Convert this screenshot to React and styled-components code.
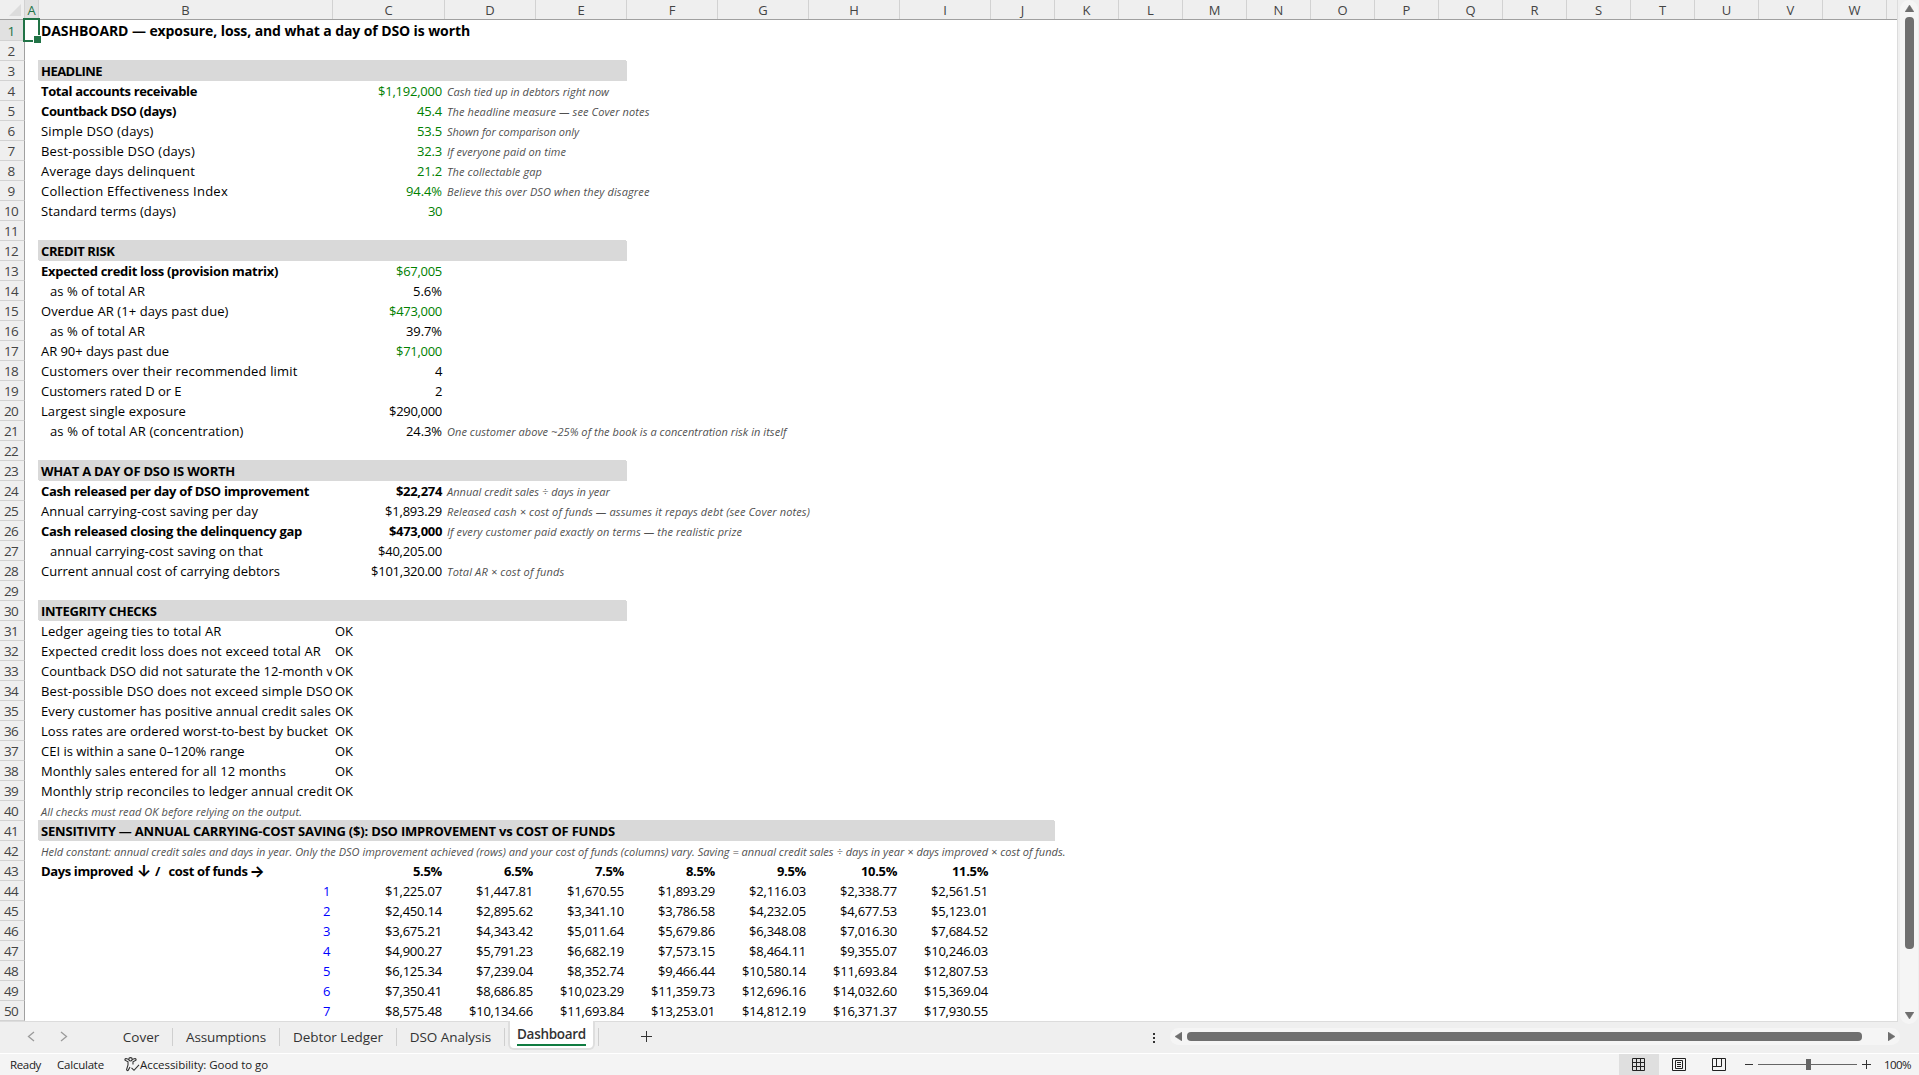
import React, { useLayoutEffect, useRef, useState } from "react";
import styled, { createGlobalStyle, css } from "styled-components";

const GlobalStyle = createGlobalStyle`
  * {
    box-sizing: border-box;
  }
  body {
    margin: 0;
    overflow: hidden;
    background: #fff;
    color: #000;
    font-family: "Open Sans", Calibri, sans-serif;
  }
`;

const columns = [
  { name: "A", width: 14 },
  { name: "B", width: 294 },
  { name: "C", width: 112 },
  { name: "D", width: 91 },
  { name: "E", width: 91 },
  { name: "F", width: 91 },
  { name: "G", width: 91 },
  { name: "H", width: 91 },
  { name: "I", width: 91 },
  ..."JKLMNOPQRSTUVW".split("").map((name) => ({ name, width: 64 })),
];

const head = (text, w, wide) => ({ type: "head", text, w, wide });
const line = (text, w, value, opts = {}) => ({
  type: "line",
  text,
  w,
  value,
  ...opts,
});
const check = (text, w) => ({ type: "check", text, w });
const remark = (text, w) => ({ type: "remark", text, w });
const blank = { type: "blank" };

const rates = ["5.5%", "6.5%", "7.5%", "8.5%", "9.5%", "10.5%", "11.5%"];
const savings = [
  ["$1,225.07", "$1,447.81", "$1,670.55", "$1,893.29", "$2,116.03", "$2,338.77", "$2,561.51"],
  ["$2,450.14", "$2,895.62", "$3,341.10", "$3,786.58", "$4,232.05", "$4,677.53", "$5,123.01"],
  ["$3,675.21", "$4,343.42", "$5,011.64", "$5,679.86", "$6,348.08", "$7,016.30", "$7,684.52"],
  ["$4,900.27", "$5,791.23", "$6,682.19", "$7,573.15", "$8,464.11", "$9,355.07", "$10,246.03"],
  ["$6,125.34", "$7,239.04", "$8,352.74", "$9,466.44", "$10,580.14", "$11,693.84", "$12,807.53"],
  ["$7,350.41", "$8,686.85", "$10,023.29", "$11,359.73", "$12,696.16", "$14,032.60", "$15,369.04"],
  ["$8,575.48", "$10,134.66", "$11,693.84", "$13,253.01", "$14,812.19", "$16,371.37", "$17,930.55"],
];

const rows = [
  { type: "title", text: "DASHBOARD — exposure, loss, and what a day of DSO is worth", w: 429 },
  blank,
  head("HEADLINE", 61),
  line("Total accounts receivable", 156, "$1,192,000", { bold: true, link: true, note: "Cash tied up in debtors right now", nw: 162 }),
  line("Countback DSO (days)", 135, "45.4", { bold: true, link: true, note: "The headline measure — see Cover notes", nw: 202.5 }),
  line("Simple DSO (days)", 112.5, "53.5", { link: true, note: "Shown for comparison only", nw: 132 }),
  line("Best-possible DSO (days)", 154, "32.3", { link: true, note: "If everyone paid on time", nw: 119 }),
  line("Average days delinquent", 154, "21.2", { link: true, note: "The collectable gap", nw: 95 }),
  line("Collection Effectiveness Index", 187, "94.4%", { link: true, note: "Believe this over DSO when they disagree", nw: 202.5 }),
  line("Standard terms (days)", 135, "30", { link: true }),
  blank,
  head("CREDIT RISK", 73.5),
  line("Expected credit loss (provision matrix)", 237, "$67,005", { bold: true, link: true }),
  line("as % of total AR", 95, "5.6%", { indent: true }),
  line("Overdue AR (1+ days past due)", 187.5, "$473,000", { link: true }),
  line("as % of total AR", 95, "39.7%", { indent: true }),
  line("AR 90+ days past due", 128, "$71,000", { link: true }),
  line("Customers over their recommended limit", 256.5, "4"),
  line("Customers rated D or E", 140.5, "2"),
  line("Largest single exposure", 145, "$290,000"),
  line("as % of total AR (concentration)", 193.5, "24.3%", { indent: true, note: "One customer above ~25% of the book is a concentration risk in itself", nw: 339.5 }),
  blank,
  head("WHAT A DAY OF DSO IS WORTH", 194),
  line("Cash released per day of DSO improvement", 268, "$22,274", { bold: true, boldValue: true, note: "Annual credit sales ÷ days in year", nw: 163 }),
  line("Annual carrying-cost saving per day", 217, "$1,893.29", { note: "Released cash × cost of funds — assumes it repays debt (see Cover notes)", nw: 363 }),
  line("Cash released closing the delinquency gap", 261, "$473,000", { bold: true, boldValue: true, note: "If every customer paid exactly on terms — the realistic prize", nw: 295 }),
  line("annual carrying-cost saving on that", 213, "$40,205.00", { indent: true }),
  line("Current annual cost of carrying debtors", 239, "$101,320.00", { note: "Total AR × cost of funds", nw: 117.5 }),
  blank,
  head("INTEGRITY CHECKS", 115.5),
  check("Ledger ageing ties to total AR", 180.5),
  check("Expected credit loss does not exceed total AR", 280),
  check("Countback DSO did not saturate the 12-month v", 292),
  check("Best-possible DSO does not exceed simple DSO", 292),
  check("Every customer has positive annual credit sales", 290),
  check("Loss rates are ordered worst-to-best by bucket", 287),
  check("CEI is within a sane 0–120% range", 203.5),
  check("Monthly sales entered for all 12 months", 245),
  check("Monthly strip reconciles to ledger annual credit", 291.5),
  remark("All checks must read OK before relying on the output.", 261),
  head("SENSITIVITY — ANNUAL CARRYING-COST SAVING ($): DSO IMPROVEMENT vs COST OF FUNDS", 574, true),
  remark(
    "Held constant: annual credit sales and days in year. Only the DSO improvement achieved (rows) and your cost of funds (columns) vary. Saving = annual credit sales ÷ days in year × days improved × cost of funds.",
    1024.5
  ),
  { type: "rates" },
  ...savings.map((values, i) => ({ type: "saving", days: String(i + 1), values })),
];

// advance of a number in the sheet font: 7px figures, 4px separators, 11px percent
const numberWidth = (text) =>
  text.split("").reduce((sum, c) => {
    if (c === "%") return sum + 11;
    if (c === "," || c === ".") return sum + 4;
    return sum + 7;
  }, 0);

// spreads or tightens the letters until the text takes the given width
const Fit = ({ w, children }) => {
  const ref = useRef(null);
  const [spacing, setSpacing] = useState(0);

  useLayoutEffect(() => {
    const natural = ref.current.getBoundingClientRect().width;
    setSpacing((w - natural) / children.length);
  }, [w, children]);

  return (
    <FitText ref={ref} style={{ letterSpacing: spacing }}>
      {children}
    </FitText>
  );
};

const NumberText = ({ children }) => (
  <Fit w={numberWidth(children)}>{children}</Fit>
);

const SheetRow = ({ row, index }) => {
  const { type } = row;
  return (
    <Row $first={index === 0}>
      <RowHead $active={index === 0}>
        <NumberText>{String(index + 1)}</NumberText>
      </RowHead>
      <Spacer />
      {type === "title" && (
        <Overflow $title>
          <Fit w={row.w}>{row.text}</Fit>
        </Overflow>
      )}
      {type === "head" && (
        <Band $wide={row.wide}>
          <Fit w={row.w}>{row.text}</Fit>
        </Band>
      )}
      {type === "remark" && (
        <Note>
          <Fit w={row.w}>{row.text}</Fit>
        </Note>
      )}
      {type === "line" && (
        <>
          <Label $bold={row.bold} $indent={row.indent}>
            <Fit w={row.w}>{row.text}</Fit>
          </Label>
          <Value $width={112} $link={row.link} $bold={row.boldValue}>
            <NumberText>{row.value}</NumberText>
          </Value>
          {row.note && (
            <Note>
              <Fit w={row.nw}>{row.note}</Fit>
            </Note>
          )}
        </>
      )}
      {type === "check" && (
        <>
          <Label>
            <Fit w={row.w}>{row.text}</Fit>
          </Label>
          <Overflow>
            <Fit w={18}>OK</Fit>
          </Overflow>
        </>
      )}
      {type === "rates" && (
        <>
          <AxisLabel>
            <Fit w={92}>Days improved</Fit>
            <ArrowText $width={22}>↓</ArrowText>
            <Fit w={13.5}>/ </Fit>
            <Fit w={79}>cost of funds</Fit>
            <ArrowText $width={19}>→</ArrowText>
          </AxisLabel>
          {rates.map((rate, i) => (
            <Value key={rate} $width={i ? 91 : 112} $bold>
              <NumberText>{rate}</NumberText>
            </Value>
          ))}
        </>
      )}
      {type === "saving" && (
        <>
          <Value $width={294} $input>
            <NumberText>{row.days}</NumberText>
          </Value>
          {row.values.map((value, i) => (
            <Value key={value} $width={i ? 91 : 112}>
              <NumberText>{value}</NumberText>
            </Value>
          ))}
        </>
      )}
    </Row>
  );
};

const Arrow = ({ dir }) => {
  const points = {
    up: "4.5,0 9,7 0,7",
    down: "0,0 9,0 4.5,7",
    left: "7,0 7,9 0,4.5",
    right: "0,0 7,4.5 0,9",
  };
  const upright = dir === "up" || dir === "down";
  return (
    <svg width={upright ? 9 : 7} height={upright ? 7 : 9}>
      <polygon
        points={points[dir]}
        fill="#6f6f6f"
        stroke="#6f6f6f"
        strokeWidth="0.5"
        strokeLinejoin="round"
      />
    </svg>
  );
};

const Chevron = ({ right }) => (
  <svg width="8" height="11" fill="none" stroke="#9b9b9b" strokeWidth="1.3">
    <path d={right ? "M1 1 L6.5 5.5 L1 10" : "M7 1 L1.5 5.5 L7 10"} />
  </svg>
);

const AccessibilityIcon = () => (
  <svg width="16" height="15" fill="none" stroke="#333" strokeWidth="1.1">
    <circle cx="6.5" cy="2.3" r="1.7" />
    <path d="M5 2.6 L2 1.6 Q.6 1.8 1 3.2 L4 4.8 V8 L2.6 12.6 Q3 14.2 4.2 13.3 L6 10" />
    <path d="M8 2.6 L11 1.6 Q12.4 1.8 12 3.2 L9 4.8 V7.5" />
    <path d="M7.5 10.8 L10 13.3 L15 7.8" />
  </svg>
);

const NormalViewIcon = () => (
  <svg width="14" height="14" fill="none" stroke="#222">
    <path d="M.5 .5 H12.5 V12.5 H.5 Z M4.5 .5 V12.5 M8.5 .5 V12.5 M.5 4.5 H12.5 M.5 8.5 H12.5" />
  </svg>
);

const PageLayoutIcon = () => (
  <svg width="14" height="14" fill="none" stroke="#222">
    <path d="M.5 .5 H13.5 V12.5 H.5 Z M3.5 2.5 H10.5 V10.5 H3.5 Z M5 4.5 H9 M5 6.5 H9 M5 8.5 H9" />
  </svg>
);

const PageBreakIcon = () => (
  <svg width="14" height="14" fill="none" stroke="#222">
    <path d="M.5 .5 H13.5 V12.5 H.5 Z M4.5 .5 V8 M.5 8.5 H9.5 M9.5 .5 V8.5" />
  </svg>
);

const Plus = ({ size }) => (
  <svg width={size} height={size} stroke="#333">
    <path d={`M0 ${size / 2} H${size} M${size / 2} 0 V${size}`} />
  </svg>
);

const App = () => {
  return (
    <Window>
      <GlobalStyle />
      <Main>
        <Sheet>
          <ColumnHeads>
            <Corner>
              <svg width="12" height="12">
                <polygon points="12,0 12,12 0,12" fill="#dcdcdc" />
              </svg>
            </Corner>
            {columns.map(({ name, width }) => (
              <ColumnHead key={name} $width={width} $active={name === "A"}>
                {name}
              </ColumnHead>
            ))}
          </ColumnHeads>
          {rows.map((row, index) => (
            <SheetRow key={index} row={row} index={index} />
          ))}
          <Selection />
        </Sheet>
        <VerticalBar>
          <Arrow dir="up" />
          <VerticalThumb />
          <Arrow dir="down" />
        </VerticalBar>
      </Main>
      <TabBar>
        <TabNav>
          <Chevron />
          <Chevron right />
        </TabNav>
        <Tab $width={75}>
          <Fit w={36.5}>Cover</Fit>
        </Tab>
        <Tab $width={107}>
          <Fit w={80}>Assumptions</Fit>
        </Tab>
        <Tab $width={117}>
          <Fit w={90}>Debtor Ledger</Fit>
        </Tab>
        <Tab $width={108}>
          <Fit w={81.5}>DSO Analysis</Fit>
        </Tab>
        <ActiveTab>
          <ActiveName>
            <Fit w={69}>Dashboard</Fit>
          </ActiveName>
        </ActiveTab>
        <TabEnd />
        <AddSheet>
          <Plus size={11} />
        </AddSheet>
        <Grip>
          <i />
          <i />
          <i />
        </Grip>
        <HorizontalBar>
          <Arrow dir="left" />
          <HorizontalThumb />
          <Arrow dir="right" />
        </HorizontalBar>
      </TabBar>
      <StatusBar>
        <StatusItem $width={47}>
          <Fit w={31}>Ready</Fit>
        </StatusItem>
        <StatusItem $width={67}>
          <Fit w={47}>Calculate</Fit>
        </StatusItem>
        <AccessibilityIcon />
        <StatusItem>
          <Fit w={128}>Accessibility: Good to go</Fit>
        </StatusItem>
        <Views>
          <View $active>
            <NormalViewIcon />
          </View>
          <View>
            <PageLayoutIcon />
          </View>
          <View>
            <PageBreakIcon />
          </View>
        </Views>
        <Zoom>
          <Minus />
          <Slider>
            <SliderHandle />
          </Slider>
          <Plus size={9} />
        </Zoom>
        <Percent>
          <Fit w={27}>100%</Fit>
        </Percent>
      </StatusBar>
    </Window>
  );
};

const FitText = styled.span`
  display: inline-block;
  white-space: pre;
`;

const Window = styled.div`
  width: 1919px;
  height: 1075px;
  display: flex;
  flex-direction: column;
  overflow: hidden;
  background: #efefef;
`;

const Main = styled.div`
  display: flex;
  height: 1021px;
`;

const Sheet = styled.div`
  position: relative;
  width: 1898px;
  background: #fff;
  border-right: 1px solid #dcdcdc;
`;

const ColumnHeads = styled.div`
  display: flex;
  height: 20px;
  background: #efefef;
  border-bottom: 1px solid #a0a0a0;
`;

const Corner = styled.div`
  width: 25px;
  padding: 4px 0 0 9px;
  border-right: 1px solid #d2d2d2;
  svg {
    display: block;
  }
`;

const ColumnHead = styled.div`
  flex: none;
  width: ${({ $width }) => $width}px;
  height: 19px;
  border-right: 1px solid #d2d2d2;
  font-size: 13px;
  line-height: 21px;
  text-align: center;
  color: ${({ $active }) => ($active ? "#217346" : "#444")};
  background: ${({ $active }) => ($active ? "#e1e1e1" : "transparent")};
`;

const Row = styled.div`
  display: flex;
  height: ${({ $first }) => ($first ? 21 : 20)}px;
  font-size: 13px;
  line-height: ${({ $first }) => ($first ? 23 : 21)}px;
`;

const RowHead = styled.div`
  flex: none;
  width: 25px;
  border-right: 1px solid #a0a0a0;
  border-bottom: 1px solid #d2d2d2;
  font-size: 13.5px;
  text-align: center;
  padding-right: 2px;
  color: ${({ $active }) => ($active ? "#217346" : "#444")};
  background: ${({ $active }) => ($active ? "#e1e1e1" : "#efefef")};
`;

const Spacer = styled.div`
  flex: none;
  width: 14px;
`;

const Overflow = styled.div`
  padding-left: 2px;
  white-space: nowrap;
  ${({ $title }) =>
    $title &&
    css`
      font-size: 14px;
      line-height: 22px;
      font-weight: 700;
    `}
`;

const Band = styled.div`
  width: ${({ $wide }) => ($wide ? 1016 : 588)}px;
  padding-left: 2px;
  font-weight: 700;
  background: #d9d9d9;
  box-shadow: -1px -1px 0 #d9d9d9;
`;

const Label = styled.div`
  flex: none;
  width: 293px;
  margin-right: 1px;
  padding-left: ${({ $indent }) => ($indent ? 11 : 2)}px;
  overflow: hidden;
  font-weight: ${({ $bold }) => ($bold ? 700 : 400)};
`;

const AxisLabel = styled(Label)`
  display: flex;
  font-weight: 700;
`;

const ArrowText = styled.span`
  width: ${({ $width }) => $width}px;
  text-align: center;
  font-family: Inter, sans-serif;
  font-size: 16px;
`;

const Value = styled.div`
  flex: none;
  width: ${({ $width }) => $width}px;
  padding-right: 3px;
  text-align: right;
  font-weight: ${({ $bold }) => ($bold ? 700 : 400)};
  color: ${({ $link, $input }) =>
    $link ? "#008000" : $input ? "#0000ff" : "#000"};
`;

const Note = styled.div`
  padding-left: 2px;
  font-size: 11px;
  font-style: italic;
  line-height: 22px;
  color: #505050;
  white-space: nowrap;
`;

const Selection = styled.div`
  position: absolute;
  left: 23px;
  top: 18px;
  width: 17px;
  height: 24px;
  border: 2px solid #217346;
  &::after {
    content: "";
    position: absolute;
    right: -4px;
    bottom: -4px;
    width: 7px;
    height: 7px;
    border: 1px solid #fff;
    background: #217346;
  }
`;

const VerticalBar = styled.div`
  width: 18px;
  height: 1024px;
  margin-left: 2px;
  padding: 5px 0;
  display: flex;
  flex-direction: column;
  align-items: center;
  background: #f5f5f5;
  border-radius: 9px;
  z-index: 1;
  svg:last-child {
    margin-top: auto;
  }
`;

const VerticalThumb = styled.div`
  width: 9px;
  height: 932px;
  margin-top: 5px;
  border-radius: 4px;
  background: #6f6f6f;
`;

const TabBar = styled.div`
  display: flex;
  height: 32px;
  width: 1898px;
  border-top: 1px solid #dcdcdc;
  font-size: 13.5px;
  color: #333;
`;

const TabNav = styled.div`
  display: flex;
  align-items: center;
  gap: 25px;
  width: 98px;
  padding-left: 27px;
  padding-bottom: 2px;
`;

const Tab = styled.div`
  display: flex;
  align-items: center;
  justify-content: center;
  width: ${({ $width }) => $width}px;
  height: 18px;
  margin-top: 6px;
  border-right: 1px solid #cfcfcf;
  &:nth-child(2) {
    padding-left: 12px;
  }
`;

const ActiveTab = styled.div`
  display: flex;
  justify-content: center;
  width: 87px;
  height: 29px;
  margin: -1px 0 0 3px;
  background: #fff;
  border: 2px solid #dedede;
  border-top: 0;
  border-radius: 0 0 6px 6px;
`;

const ActiveName = styled.div`
  height: 25px;
  line-height: 27px;
  font-weight: 600;
  border-bottom: 2px solid #107c41;
`;

const TabEnd = styled.div`
  width: 4px;
  height: 18px;
  margin-top: 6px;
  border-right: 1px solid #cfcfcf;
`;

const AddSheet = styled.div`
  padding: 9px 0 0 42px;
  svg {
    display: block;
  }
`;

const Grip = styled.div`
  display: flex;
  flex-direction: column;
  gap: 2px;
  margin: 11px 0 0 auto;
  i {
    width: 2px;
    height: 2px;
    background: #333;
  }
`;

const HorizontalBar = styled.div`
  display: flex;
  align-items: center;
  width: 730px;
  height: 17px;
  margin: 6px -2px 0 15px;
  padding: 0 5px;
  background: #f5f5f5;
  border-radius: 9px;
  svg:last-child {
    margin-left: auto;
  }
`;

const HorizontalThumb = styled.div`
  width: 675px;
  height: 9px;
  margin-left: 5px;
  border-radius: 4px;
  background: #6f6f6f;
`;

const StatusBar = styled.div`
  display: flex;
  align-items: center;
  height: 22px;
  padding-left: 10px;
  border-top: 1px solid #fff;
  background: #f4f4f4;
  font-size: 11.5px;
  line-height: 21px;
  color: #222;
`;

const StatusItem = styled.div`
  ${({ $width }) =>
    $width &&
    css`
      width: ${$width}px;
    `}
`;

const Views = styled.div`
  display: flex;
  margin-left: auto;
`;

const View = styled.div`
  display: flex;
  align-items: center;
  justify-content: center;
  width: 40px;
  height: 21px;
  background: ${({ $active }) => ($active ? "#dfdfdf" : "transparent")};
`;

const Zoom = styled.div`
  display: flex;
  align-items: center;
  width: 126px;
  margin-left: 6px;
  gap: 5px;
`;

const Minus = styled.div`
  width: 8px;
  height: 1px;
  background: #333;
`;

const Slider = styled.div`
  display: flex;
  align-items: center;
  justify-content: center;
  width: 100px;
  height: 11px;
  background: linear-gradient(#666, #666) center / 100% 1px no-repeat;
`;

const SliderHandle = styled.div`
  width: 5px;
  height: 11px;
  margin-left: 1px;
  background: #666;
`;

const Percent = styled.div`
  width: 48px;
  padding-left: 13px;
`;

export default App;
